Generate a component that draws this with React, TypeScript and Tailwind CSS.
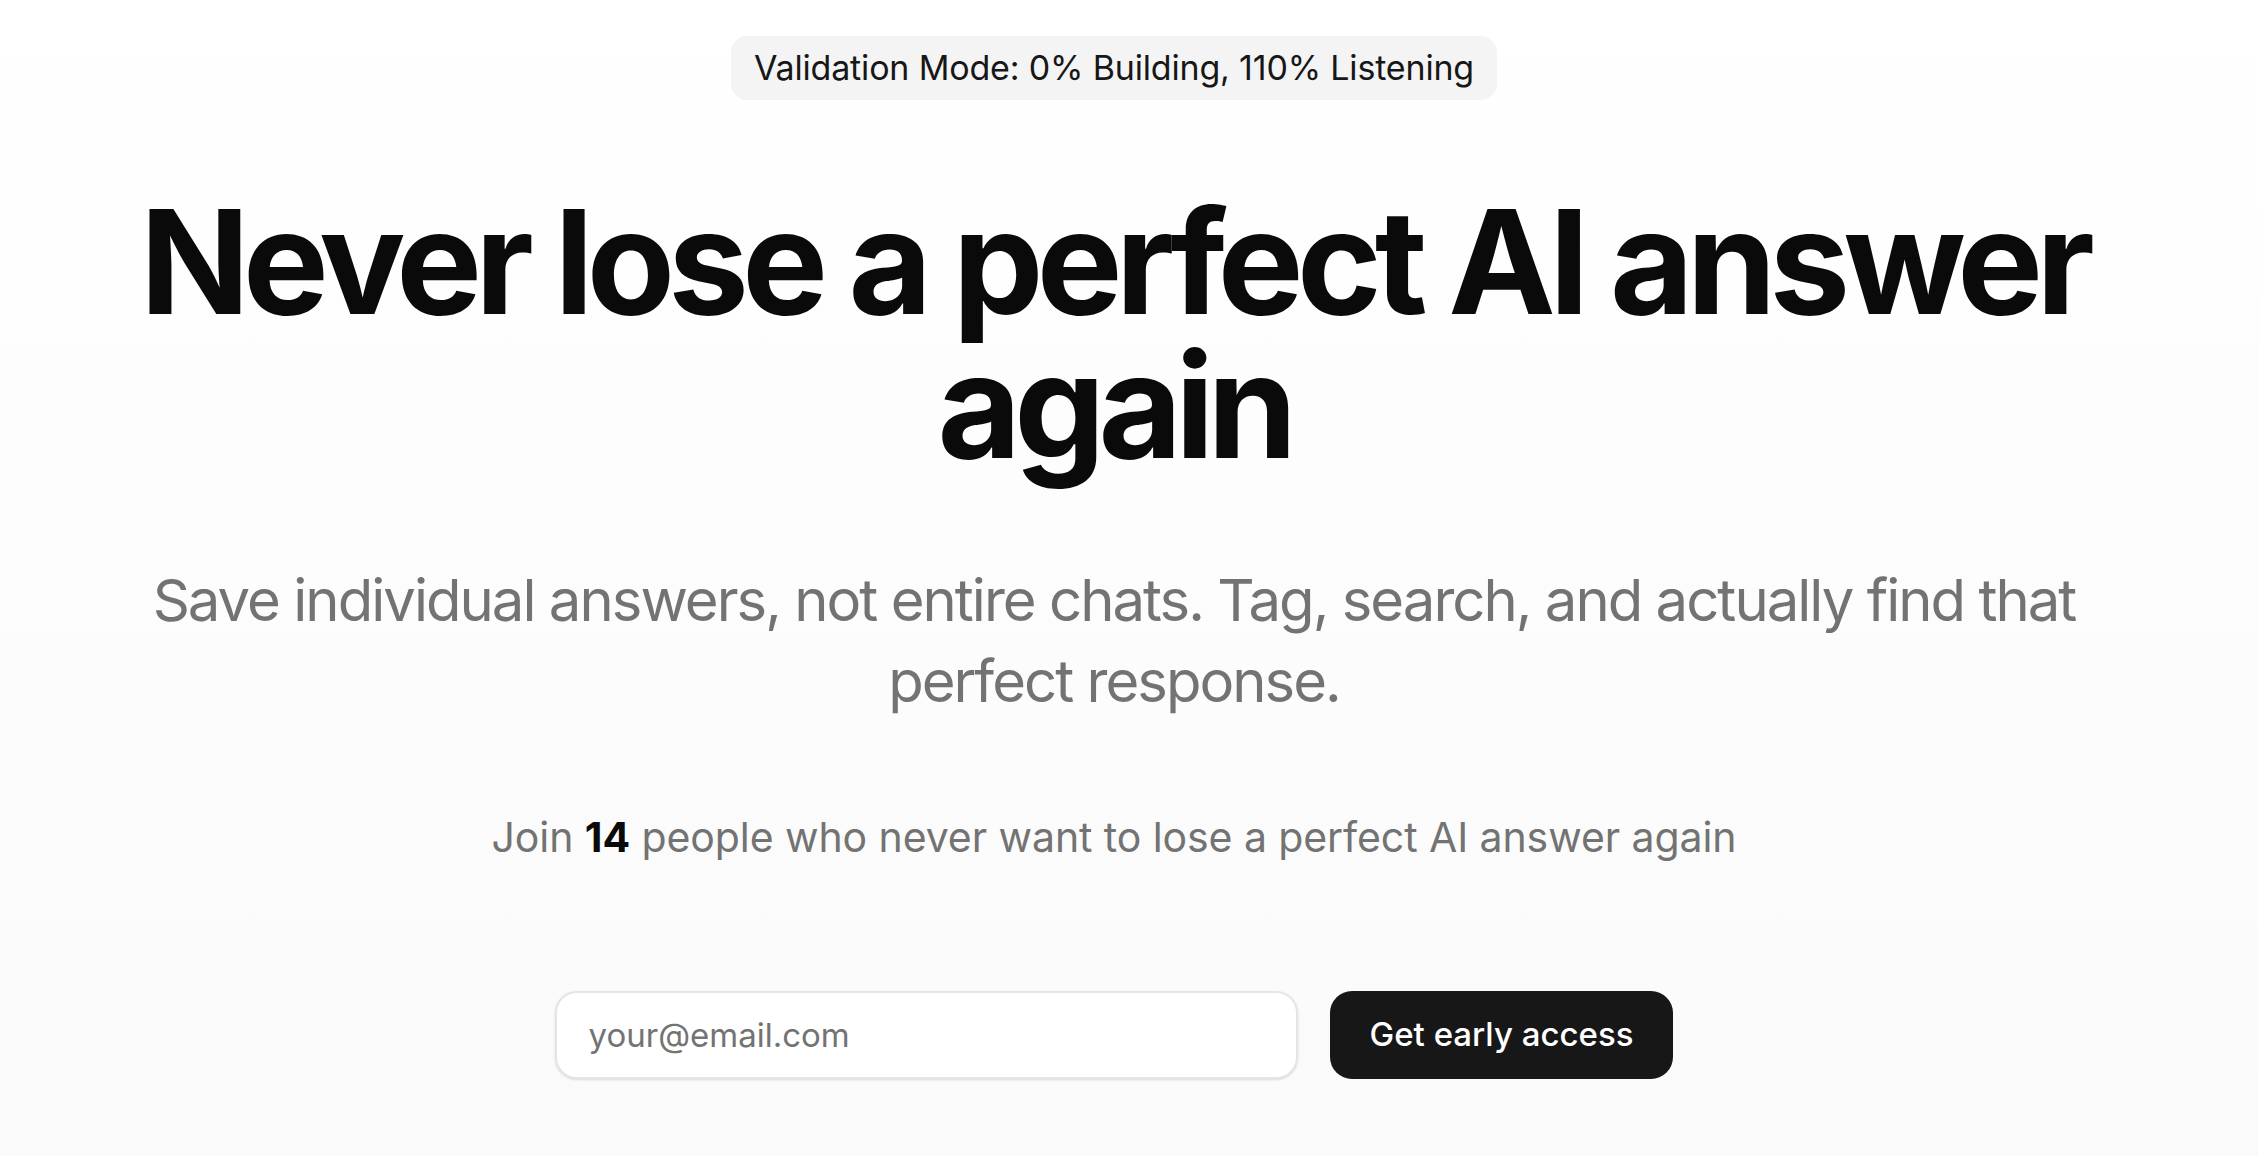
export default function App() {
  return (
    <div
      className="min-h-screen w-full bg-gradient-to-b from-white to-[#fafafa] pr-[30px] text-[#0a0a0a] antialiased"
      style={{ fontFamily: "Inter, 'Noto Sans', sans-serif" }}
    >
      <main className="flex flex-col items-center px-12 pt-[36px] text-center">
        <div className="rounded-[16px] bg-[#f4f4f4] px-[23px] py-2 text-[34px] leading-[48px] tracking-[-0.005em] text-[#171717]">
          Validation Mode: 0% Building, 110% Listening
        </div>

        <h1 className="mt-[90px] max-w-[2048px] text-[144px] font-bold leading-none tracking-[-0.047em] text-[#0a0a0a]">
          Never lose a perfect AI answer again
        </h1>

        <p className="mt-[82px] max-w-[2048px] text-[58px] leading-[81px] tracking-[-0.034em] text-[#737373]">
          Save individual answers, not entire chats. Tag, search, and actually find that perfect
          response.
        </p>

        <p className="mt-[87px] text-[41px] leading-[56px] tracking-[-0.002em] text-[#737373]">
          Join <span className="font-bold text-[#0a0a0a]">14</span> people who never want to lose a
          perfect AI answer again
        </p>

        <form className="mt-[126px] flex items-center gap-8" onSubmit={(e) => e.preventDefault()}>
          <input
            type="email"
            placeholder="your@email.com"
            className="h-[88px] w-[743px] rounded-[22px] border-2 border-[#e5e5e5] bg-white px-8 text-[33px] text-[#0a0a0a] shadow-sm outline-none placeholder:text-[#737373]"
          />
          <button
            type="submit"
            className="h-[88px] rounded-[22px] bg-[#171717] px-10 text-[33px] font-medium text-white"
          >
            Get early access
          </button>
        </form>
      </main>
    </div>
  );
}
